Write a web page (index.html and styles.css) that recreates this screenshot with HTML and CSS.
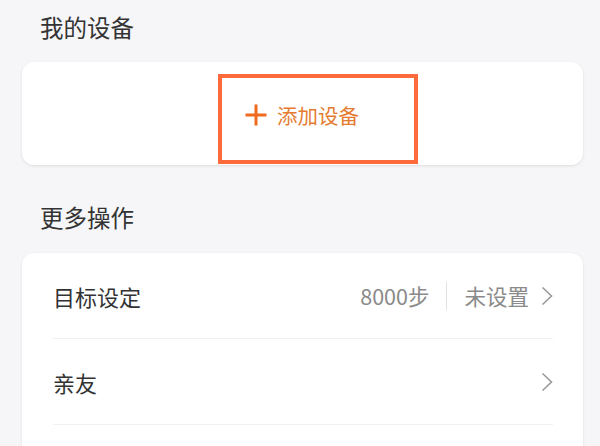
FILE: index.html
```html
<!DOCTYPE html>
<html lang="zh">
<head>
<meta charset="utf-8">
<link rel="stylesheet" href="styles.css">
</head>
<body>
<div class="page">
  <h2 class="section-title">我的设备</h2>
  <div class="card device-card">
    <div class="add-btn">
      <svg class="plus" width="24" height="24" viewBox="0 0 24 24"><path d="M12 1.5v21M1.5 12h21" stroke="#f06a1e" stroke-width="3" fill="none"/></svg>
      <span class="add-text">添加设备</span>
    </div>
    <div class="highlight"></div>
  </div>
  <h2 class="section-title second">更多操作</h2>
  <div class="card list-card">
    <div class="row">
      <span class="label">目标设定</span>
      <div class="right">
        <span class="value">8000步</span>
        <span class="divider"></span>
        <span class="value">未设置</span>
        <svg class="chev" width="12" height="20" viewBox="0 0 12 20"><path d="M1.5 1.5l9 8.5-9 8.5" stroke="#9a9a9a" stroke-width="1.6" fill="none"/></svg>
      </div>
    </div>
    <div class="row">
      <span class="label">亲友</span>
      <div class="right">
        <svg class="chev" width="12" height="20" viewBox="0 0 12 20"><path d="M1.5 1.5l9 8.5-9 8.5" stroke="#9a9a9a" stroke-width="1.6" fill="none"/></svg>
      </div>
    </div>
    <div class="row"></div>
  </div>
</div>
</body>
</html>
```
FILE: styles.css
```css
* { box-sizing: border-box; }
html, body { margin: 0; padding: 0; }
body {
  background: #f6f6f8;
  font-family: "Noto Sans CJK SC", "Noto Sans", sans-serif;
  width: 600px;
  height: 446px;
  overflow: hidden;
}
.page {
  padding: 12px 17px 0 22px;
}
.section-title {
  margin: 0 0 0 18px;
  font-size: 23.5px;
  line-height: 30px;
  font-weight: 400;
  color: #333;
}
.section-title.second {
  margin-top: 37px;
}
.card {
  background: #fff;
  border-radius: 12px;
  box-shadow: 0 1px 3px rgba(0,0,0,0.10);
}
.device-card {
  position: relative;
  margin-top: 20px;
  height: 103px;
  display: flex;
  align-items: center;
  justify-content: center;
}
.add-btn {
  display: flex;
  align-items: center;
  gap: 9px;
  margin-top: 2px;
  margin-left: -2px;
}
.add-text {
  font-size: 20.5px;
  color: #e57b30;
  line-height: 28px;
}
.highlight {
  position: absolute;
  left: 196px;
  top: 12px;
  width: 200px;
  height: 90px;
  border: 4px solid #ff6a3c;
}
.list-card {
  margin-top: 21px;
  padding: 0 30px 0 31px;
  border-radius: 12px 12px 0 0;
  height: 200px;
}
.row {
  height: 86px;
  display: flex;
  align-items: center;
  justify-content: space-between;
  border-bottom: 1px solid #f0f0f0;
}
.label {
  font-size: 22px;
  color: #333;
}
.right {
  display: flex;
  align-items: center;
}
.value {
  font-size: 21.5px;
  color: #8a8a8a;
}
.divider {
  width: 1px;
  height: 28px;
  background: #e2e2e2;
  margin: 0 17px;
}
.chev {
  margin-left: 12px;
}
```
